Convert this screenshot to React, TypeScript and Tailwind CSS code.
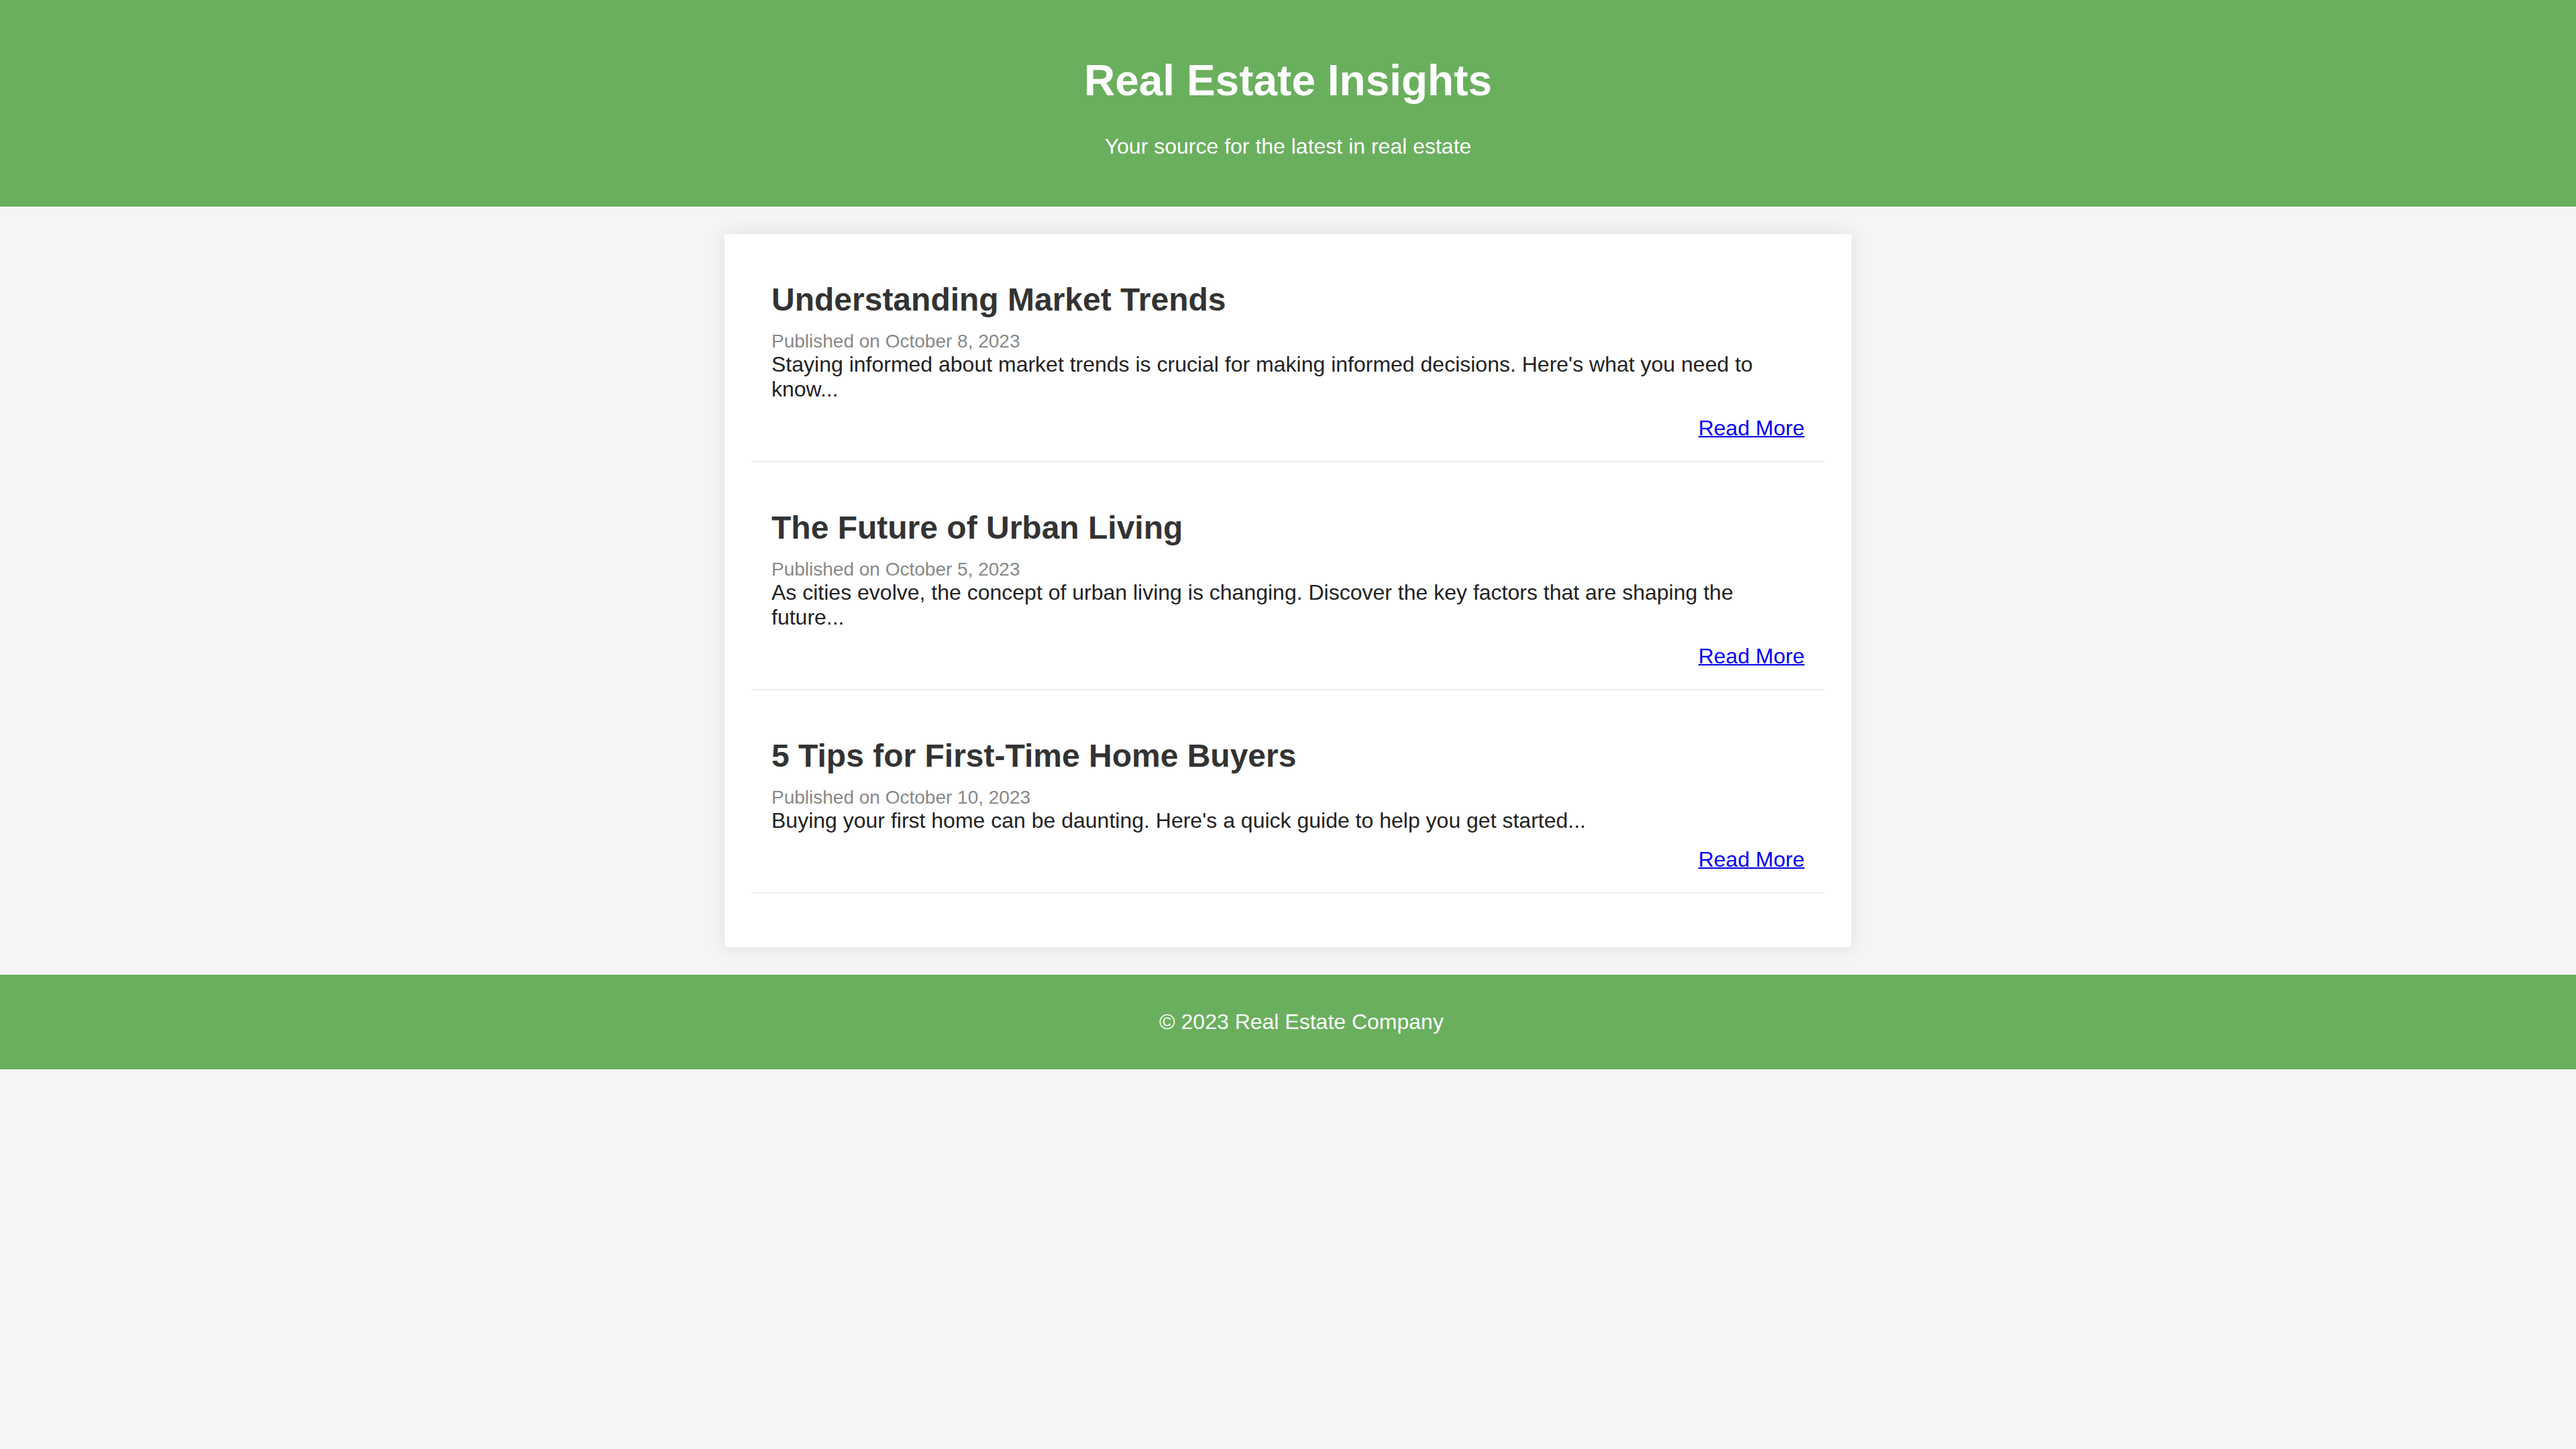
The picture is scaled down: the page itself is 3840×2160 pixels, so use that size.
const posts = [
  {
    title: "Understanding Market Trends",
    date: "October 8, 2023",
    excerpt:
      "Staying informed about market trends is crucial for making informed decisions. Here's what you need to know...",
  },
  {
    title: "The Future of Urban Living",
    date: "October 5, 2023",
    excerpt:
      "As cities evolve, the concept of urban living is changing. Discover the key factors that are shaping the future...",
  },
  {
    title: "5 Tips for First-Time Home Buyers",
    date: "October 10, 2023",
    excerpt:
      "Buying your first home can be daunting. Here's a quick guide to help you get started...",
  },
];

export default function App() {
  return (
    <div className="min-h-[2160px] bg-[#f5f5f5] font-['Liberation_Sans',Arial,sans-serif] text-[#333]">
      {/* Header */}
      <header className="bg-[#6aaf5e] pt-[83px] pb-[71px] text-center text-white">
        <h1 className="text-[64px] font-bold leading-[74px]">Real Estate Insights</h1>
        <p className="mt-[43px] text-[32px] leading-[37px]">Your source for the latest in real estate</p>
      </header>

      {/* Posts */}
      <main className="mx-auto my-[41px] w-[1680px] bg-white p-[40px] shadow-[0_0_25px_rgba(0,0,0,0.1)]">
        {posts.map((post) => (
          <article key={post.title} className="mb-[40px] border-b-2 border-[#eeeeee] p-[30px]">
            <h2 className="mb-[19px] text-[48px] font-bold leading-[55px] text-[#333]">{post.title}</h2>
            <p className="text-[28px] leading-[32px] text-[#888]">Published on {post.date}</p>
            <p className="text-[32px] leading-[37px] text-[#222]">{post.excerpt}</p>
            <div className="mt-[21px] text-right">
              <a href="#" className="text-[32px] leading-[37px] text-[#0000ee] underline decoration-2">
                Read More
              </a>
            </div>
          </article>
        ))}
      </main>

      {/* Footer */}
      <footer className="bg-[#6aaf5e] py-[52px] pl-[40px] text-center text-[32px] leading-[37px] text-white">
        <p>&copy; 2023 Real Estate Company</p>
      </footer>
    </div>
  );
}
